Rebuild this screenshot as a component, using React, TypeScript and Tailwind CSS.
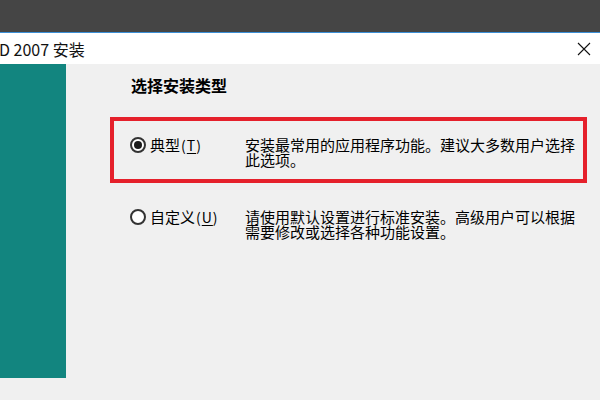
const cjk = { fontFamily: '"Noto Sans CJK SC", "Noto Sans", sans-serif' };

function Radio({ checked }: { checked?: boolean }) {
  return (
    <span className="flex h-[16px] w-[16px] shrink-0 items-center justify-center rounded-full border-2 border-[#333] bg-white">
      {checked && <span className="h-[8px] w-[8px] rounded-full bg-[#1a1a1a]" />}
    </span>
  );
}

function Option({
  checked,
  label,
  hotkey,
  lines,
}: {
  checked?: boolean;
  label: string;
  hotkey: string;
  lines: string[];
}) {
  return (
    <div className="flex text-[15px] leading-[15px] text-black" style={cjk}>
      <div className="flex h-[18px] w-[115px] shrink-0 items-center gap-[4px]">
        <Radio checked={checked} />
        <span>
          {label}
          <span className="ml-[1px] text-[14px] tracking-[1px]">
            (<span className="underline underline-offset-2">{hotkey}</span>)
          </span>
        </span>
      </div>
      <div className="pt-[1px]">
        {lines.map((l) => (
          <div key={l}>{l}</div>
        ))}
      </div>
    </div>
  );
}

export default function App() {
  return (
    <div className="flex h-[400px] w-[600px] flex-col overflow-hidden bg-[#f0f0f0]">
      <div className="h-[32px] bg-[#454545]" />
      <div className="h-px bg-[#3c8fd6]" />
      <div className="flex h-[31px] items-center justify-between bg-white pr-[9px]">
        <span className="-ml-[1px] pt-[1px] text-[16px] text-[#111]" style={cjk}>
          D 2007 安装
        </span>
        <svg width="14" height="14" viewBox="0 0 14 14">
          <path d="M1 1L13 13M13 1L1 13" stroke="#111" strokeWidth="1.1" />
        </svg>
      </div>
      <div className="flex flex-1">
        <div className="h-[314px] w-[66px] bg-[#12857f]" />
        <div className="flex flex-1 flex-col pl-[44px] pr-[13px] pt-[10px]">
          <div className="h-[22px] pl-[21px] text-[16px] font-bold leading-[22px] text-black" style={cjk}>
            选择安装类型
          </div>
          <div className="mt-[21px] h-[66px] border-4 border-[#e5202b] pl-[16px] pt-[15px]">
            <Option
              checked
              label="典型"
              hotkey="T"
              lines={["安装最常用的应用程序功能。建议大多数用户选择", "此选项。"]}
            />
          </div>
          <div className="mt-[25px] pl-[20px]">
            <Option
              label="自定义"
              hotkey="U"
              lines={["请使用默认设置进行标准安装。高级用户可以根据", "需要修改或选择各种功能设置。"]}
            />
          </div>
        </div>
      </div>
    </div>
  );
}
